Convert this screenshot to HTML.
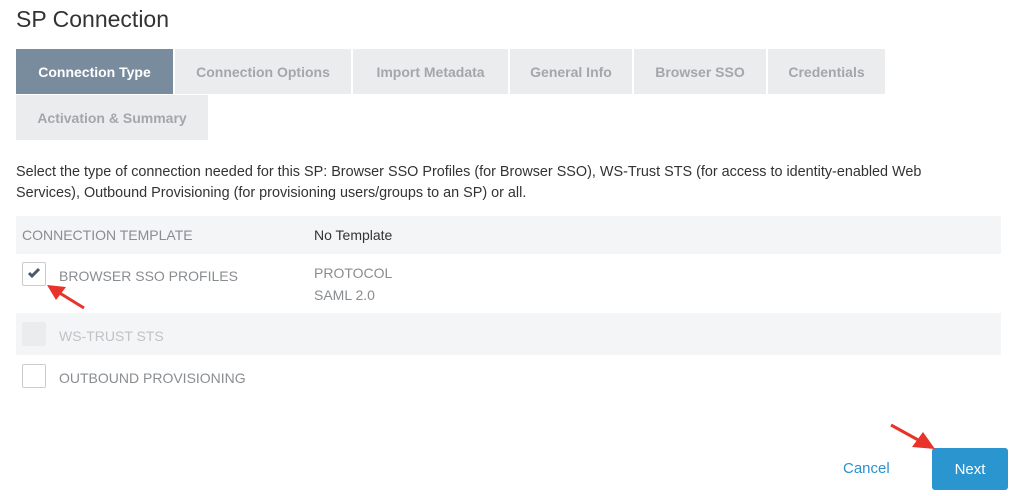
<!DOCTYPE html>
<html><head><style>
body{margin:0;width:1015px;height:496px;background:#fff;font-family:"Liberation Sans",sans-serif;position:relative;overflow:hidden}
.a{position:absolute}
h1{position:absolute;left:16px;top:6px;margin:0;font-size:23px;font-weight:normal;color:#333}
.t{position:absolute;height:45px;background:#ebecee;color:#a4a6a9;font-size:14px;font-weight:bold;display:flex;align-items:center;justify-content:center}
.t.on{background:#798c9e;color:#fff}
.cb{position:absolute;width:24px;height:24px;border:1px solid #ccc;border-radius:2px;background:#fff;box-sizing:border-box}
.lbl{position:absolute;font-size:14px;color:#8a8d90}
</style></head><body>
<h1>SP Connection</h1>
<div class="t on" style="left:16px;top:49px;width:157px">Connection Type</div>
<div class="t" style="left:175px;top:49px;width:176px">Connection Options</div>
<div class="t" style="left:353px;top:49px;width:155px">Import Metadata</div>
<div class="t" style="left:510px;top:49px;width:122px">General Info</div>
<div class="t" style="left:634px;top:49px;width:132px">Browser SSO</div>
<div class="t" style="left:768px;top:49px;width:117px">Credentials</div>
<div class="t" style="left:16px;top:95px;width:192px">Activation &amp; Summary</div>
<div class="a" style="left:16px;top:162px;width:930px;font-size:14.4px;line-height:21px;color:#333">Select the type of connection needed for this SP: Browser SSO Profiles (for Browser SSO), WS-Trust STS (for access to identity-enabled Web Services), Outbound Provisioning (for provisioning users/groups to an SP) or all.</div>
<div class="a" style="left:16px;top:216px;width:985px;height:38px;background:#f4f5f7"></div>
<div class="lbl" style="left:22px;top:227px">CONNECTION TEMPLATE</div>
<div class="lbl" style="left:314px;top:227px;color:#333">No Template</div>
<div class="cb" style="left:22px;top:262px"></div>
<svg class="a" style="left:27px;top:267px" width="14" height="12"><path d="M2 6 L5 9 L12 2" stroke="#4a5a6c" stroke-width="3" fill="none"/></svg>
<div class="lbl" style="left:59px;top:268px">BROWSER SSO PROFILES</div>
<div class="lbl" style="left:314px;top:262px;line-height:22px">PROTOCOL<br>SAML 2.0</div>
<svg class="a" style="left:44px;top:282px" width="44" height="30"><path d="M40 26 L14 10" stroke="#e8332a" stroke-width="3"/><path d="M3 3 L22 5 L12 18 Z" fill="#e8332a"/></svg>
<div class="a" style="left:16px;top:313px;width:985px;height:42px;background:#f4f5f7"></div>
<div class="cb" style="left:22px;top:322px;background:#ebecee;border-color:#ebecee"></div>
<div class="lbl" style="left:59px;top:328px;color:#c0c2c5">WS-TRUST STS</div>
<div class="cb" style="left:22px;top:364px"></div>
<div class="lbl" style="left:59px;top:370px">OUTBOUND PROVISIONING</div>
<div class="a" style="left:843px;top:460px;font-size:15px;color:#2a92cc">Cancel</div>
<div class="a" style="left:932px;top:448px;width:76px;height:42px;background:#2a95cf;border-radius:3px;color:#fff;font-size:15px;display:flex;align-items:center;justify-content:center">Next</div>
<svg class="a" style="left:888px;top:422px" width="50" height="30"><path d="M3 3 L32 19" stroke="#e8332a" stroke-width="3"/><path d="M47 27 L24 25 L35 10 Z" fill="#e8332a"/></svg>
</body></html>
